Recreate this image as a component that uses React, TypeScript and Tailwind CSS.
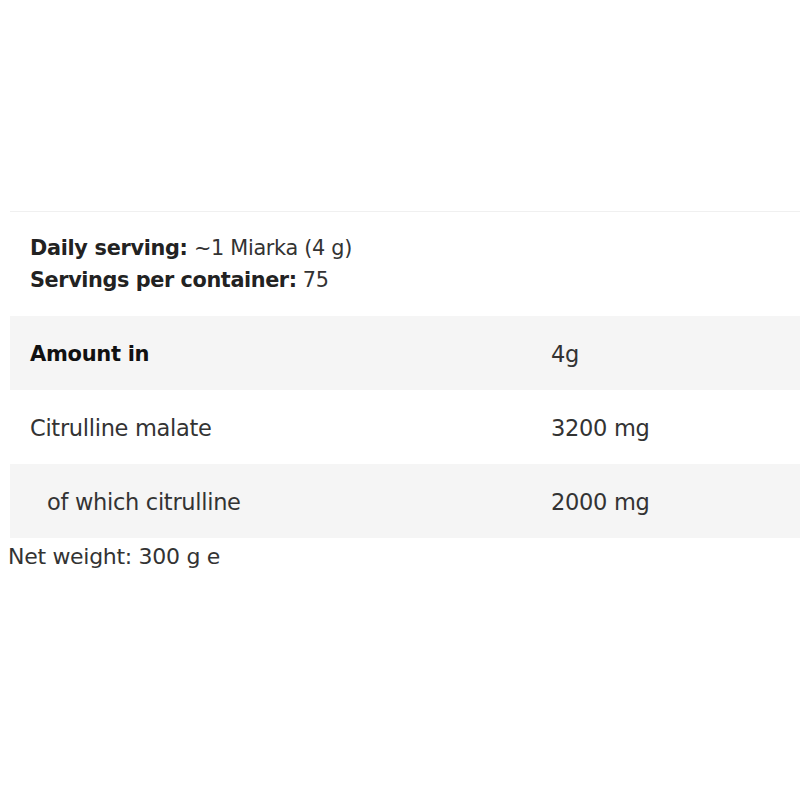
import React from 'react';

const rows = [
    { label: 'Amount in', value: '4g', bold: true, shaded: true },
    { label: 'Citrulline malate', value: '3200 mg', bold: false, shaded: false },
    { label: 'of which citrulline', value: '2000 mg', bold: false, shaded: true, indent: true },
];

const App: React.FC = () => {
    return (
        <div className="w-[800px] h-[800px] bg-white text-[#222] pt-[211px]" style={{ fontFamily: '"DejaVu Sans", "Liberation Sans", sans-serif' }}>
            <div className="ml-[10px] border-t border-[#f0f0f0]" />
            <div className="pl-[30px] pt-[20px] pb-[20px] text-[20.8px] leading-[32px]">
                <p className="tracking-[-0.3px]"><span className="font-semibold">Daily serving:</span> <span className="text-[#333]">~1 Miarka (4 g)</span></p>
                <p className="tracking-[-0.4px]"><span className="font-semibold">Servings per container:</span> <span className="text-[#333]">75</span></p>
            </div>
            <div className="ml-[10px]">
                {rows.map((r) => (
                    <div key={r.label} className={`flex h-[74px] items-center pt-[3px] text-[22.5px] tracking-[-0.3px] ${r.shaded ? 'bg-[#f5f5f5]' : 'bg-white'}`}>
                        <div className={`w-[541px] ${r.indent ? 'pl-[37px]' : 'pl-[20px]'} ${r.bold ? 'font-semibold text-[21px] text-[#111]' : 'text-[#333]'}`}>{r.label}</div>
                        <div className="text-[#333]">{r.value}</div>
                    </div>
                ))}
            </div>
            <p className="pl-[8px] pt-[2px] text-[22px] tracking-[-0.3px] text-[#333]">Net weight: 300 g e</p>
        </div>
    );
};

export default App;
